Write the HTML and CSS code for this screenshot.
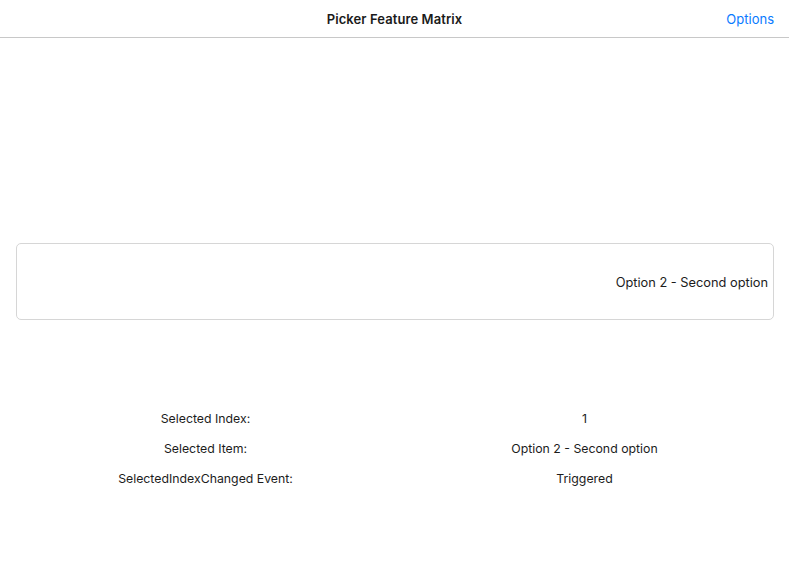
FILE: index.html
```html
<!DOCTYPE html>
<html>
<head>
<meta charset="utf-8">
<link rel="stylesheet" href="styles.css">
</head>
<body>
<div class="window">
  <header class="navbar">
    <div class="title">Picker Feature Matrix</div>
    <a class="options">Options</a>
  </header>
  <main class="content">
    <div class="picker">
      <span class="picker-value">Option 2 - Second option</span>
    </div>
    <div class="matrix">
      <div class="label">Selected Index:</div>
      <div class="value">1</div>
      <div class="label">Selected Item:</div>
      <div class="value">Option 2 - Second option</div>
      <div class="label">SelectedIndexChanged Event:</div>
      <div class="value">Triggered</div>
    </div>
  </main>
</div>
</body>
</html>
```

FILE: styles.css
```css
html, body {
  margin: 0;
  padding: 0;
  background: #ffffff;
}
body {
  font-family: Inter, "Liberation Sans", sans-serif;
  font-size: 12.3px;
  color: #1c1c1c;
}
.window {
  height: 563px;
  box-sizing: border-box;
  border-radius: 0 0 11px 11px;
  overflow: hidden;
  background: #fff;
}
.navbar {
  position: relative;
  height: 37px;
  border-bottom: 1px solid #c8c8c8;
  display: flex;
  align-items: center;
  justify-content: center;
}
.title {
  font-weight: 600;
  font-size: 13px;
  color: #1a1a1a;
  letter-spacing: 0.1px;
}
.options {
  position: absolute;
  right: 15px;
  top: 0;
  height: 37px;
  display: flex;
  align-items: center;
  color: #0a7aff;
  font-size: 13px;
}
.content {
  padding: 205px 15px 0 16px;
}
.picker {
  height: 77px;
  box-sizing: border-box;
  border: 1px solid #d6d6d6;
  border-radius: 5px;
  display: flex;
  align-items: center;
  justify-content: flex-end;
  padding: 1px 5px 0 0;
}
.picker-value {
  font-size: 12.8px;
}
.matrix {
  margin-top: 83px;
  display: grid;
  grid-template-columns: 1fr 1fr;
  grid-auto-rows: 30px;
}
.label, .value {
  display: flex;
  align-items: center;
  justify-content: center;
}
```
